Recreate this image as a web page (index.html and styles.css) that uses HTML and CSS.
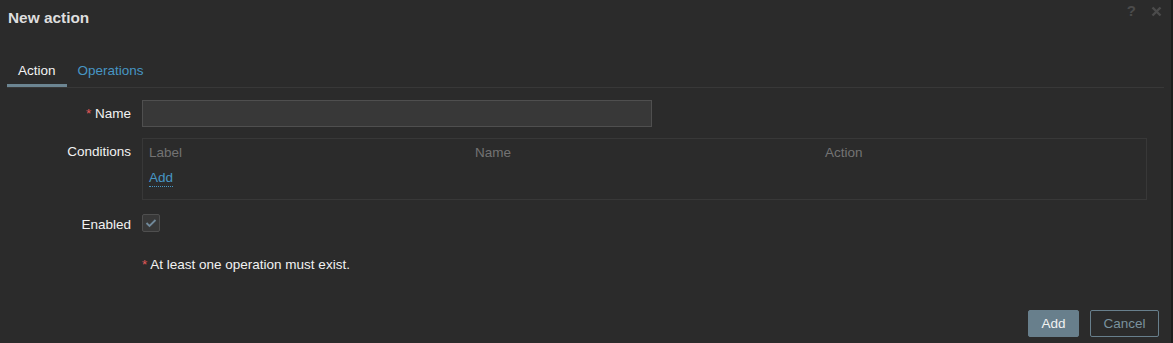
FILE: index.html
```html
<!DOCTYPE html>
<html lang="en">
<head>
    <meta charset="UTF-8">
    <meta name="viewport" content="width=device-width, initial-scale=1.0">
    <title>New action</title>
    <link rel="stylesheet" href="styles.css">
</head>
<body>
    <div class="dialog">
        <div class="dialog-header">
            <h4>New action</h4>
            <div class="header-tools">
                <span class="help">?</span>
                <svg class="close" width="11" height="11" viewBox="0 0 11 11">
                    <path d="M1.5 1.5 L9.5 9.5 M9.5 1.5 L1.5 9.5" stroke="#4b4b4b" stroke-width="2.4" fill="none"/>
                </svg>
            </div>
        </div>

        <ul class="tabs">
            <li class="tab active">Action</li>
            <li class="tab">Operations</li>
        </ul>

        <form class="form">
            <div class="form-row">
                <label class="form-label"><span class="required">*</span> Name</label>
                <div class="form-field">
                    <input type="text" class="text-input">
                </div>
            </div>
            <div class="form-row">
                <label class="form-label">Conditions</label>
                <div class="form-field">
                    <div class="conditions">
                        <div class="conditions-head">
                            <span>Label</span>
                            <span>Name</span>
                            <span>Action</span>
                        </div>
                        <a class="link-action">Add</a>
                    </div>
                </div>
            </div>
            <div class="form-row">
                <label class="form-label">Enabled</label>
                <div class="form-field">
                    <span class="checkbox">
                        <svg width="12" height="10" viewBox="0 0 12 10">
                            <path d="M1.5 5 L4.5 8 L10.5 2" stroke="#71899a" stroke-width="1.8" fill="none"/>
                        </svg>
                    </span>
                </div>
            </div>
            <div class="form-row note-row">
                <div class="form-label"></div>
                <div class="form-field note"><span class="required">*</span> At least one operation must exist.</div>
            </div>
        </form>

        <div class="dialog-footer">
            <button class="btn btn-primary">Add</button>
            <button class="btn btn-alt">Cancel</button>
        </div>
    </div>
</body>
</html>
```

FILE: styles.css
```css
/* General styles */
body {
    margin: 0;
    padding: 0;
    background: #1d1d1d;
    font-family: 'Liberation Sans', Arial, sans-serif;
    font-size: 13.5px;
    color: #f2f2f2;
}

.dialog {
    width: 1171px;
    height: 343px;
    background: #2b2b2b;
    position: relative;
}

/* Header */
.dialog-header {
    height: 36px;
    padding: 0 8px;
}

.dialog-header h4 {
    margin: 0;
    line-height: 36px;
    font-size: 15.4px;
    font-weight: bold;
    color: #dedede;
}

.header-tools {
    position: absolute;
    top: 2px;
    right: 9px;
    display: flex;
    align-items: center;
    gap: 15px;
}

.help {
    font-weight: bold;
    font-size: 15px;
    color: #4b4b4b;
}

.close {
    margin-top: 1px;
}

/* Tabs */
.tabs {
    list-style: none;
    margin: 18px 7px 0;
    padding: 0;
    display: flex;
    border-bottom: 1px solid #383838;
}

.tab {
    padding: 9px 11px 5px;
    line-height: 16px;
    color: #4796c4;
    border-bottom: 3px solid transparent;
}

.tab.active {
    color: #f2f2f2;
    border-bottom-color: #6c8592;
}

/* Form */
.form {
    margin-top: 12px;
}

.form-row {
    display: flex;
    margin-bottom: 11px;
}

.form-label {
    width: 131px;
    box-sizing: border-box;
    padding-top: 6px;
    padding-left: 8px;
    line-height: 16px;
    text-align: right;
}

.form-field {
    margin-left: 11px;
}

.required {
    color: #e45959;
}

.text-input {
    width: 510px;
    height: 27px;
    box-sizing: border-box;
    background: #383838;
    border: 1px solid #4f4f4f;
    margin: 0;
    color: #f2f2f2;
}

.conditions {
    width: 1005px;
    height: 62px;
    box-sizing: border-box;
    border: 1px solid #383838;
    padding: 6px 6px 0;
}

.conditions-head {
    display: grid;
    grid-template-columns: 326px 350px 1fr;
    line-height: 16px;
    color: #737373;
}

.link-action {
    display: inline-block;
    margin-top: 9px;
    line-height: 16px;
    color: #4796c4;
    border-bottom: 1px dotted #4796c4;
}

.checkbox {
    display: flex;
    align-items: center;
    justify-content: center;
    width: 18px;
    height: 18px;
    box-sizing: border-box;
    margin-top: 3px;
    border: 1px solid #4f4f4f;
    background: #383838;
    border-radius: 2px;
}

.note-row {
    margin-top: 18px;
}

.note {
    padding-top: 6px;
    line-height: 16px;
}

/* Footer */
.dialog-footer {
    position: absolute;
    right: 12px;
    bottom: 6px;
    display: flex;
    gap: 11px;
}

.btn {
    height: 27px;
    padding: 0 12px;
    font-family: inherit;
    font-size: 13.5px;
    border-radius: 2px;
    cursor: pointer;
}

.btn-primary {
    min-width: 51px;
    background: #687f8c;
    border: 1px solid #687f8c;
    color: #f2f2f2;
}

.btn-alt {
    min-width: 69px;
    background: transparent;
    border: 1px solid #687f8c;
    color: #7a929e;
}
```
